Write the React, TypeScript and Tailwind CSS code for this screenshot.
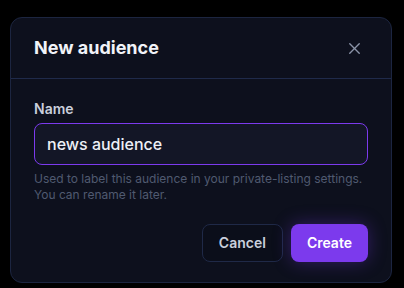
import { X } from "lucide-react";

export default function App() {
  return (
    <div className="h-[288px] w-[404px] bg-black pl-[10px] pt-[17px]" style={{ fontFamily: "Inter, 'Noto Sans', sans-serif" }}>
      <div className="w-[382px] rounded-xl border border-[#1c2540] bg-[#0d101d]">
        {/* Header */}
        <div className="flex h-[61px] items-center justify-between border-b border-[#1f2a4a] pl-[23px] pr-[27px]">
          <h2 className="text-lg font-bold text-[#f1f3f8]">New audience</h2>
          <X size={19} strokeWidth={1.75} className="text-[#8a93a8]" />
        </div>

        {/* Body */}
        <div className="pb-5 pl-[23px] pr-[23px] pt-5">
          <label className="block text-sm font-semibold text-[#c9cfdc]">Name</label>
          <input
            defaultValue="news audience"
            className="mt-1 h-[42px] w-full rounded-lg border border-[#7c3aed] bg-[#131626] px-3 text-base font-medium text-[#eef0f6] outline-none"
          />
          <p className="mt-1.5 text-xs leading-4 text-[#505a70]">
            Used to label this audience in your private-listing settings.
            <br />
            You can rename it later.
          </p>

          <div className="mt-[21px] flex justify-end gap-2">
            <button className="h-[38px] rounded-lg border border-[#1f2947] bg-[#0b0e1a] px-4 text-sm font-semibold text-[#c9cfdc]">
              Cancel
            </button>
            <button className="h-[38px] rounded-lg bg-[#7c3aed] px-4 text-sm font-semibold text-white shadow-[0_0_18px_rgba(124,58,237,0.35)]">
              Create
            </button>
          </div>
        </div>
      </div>
    </div>
  );
}
